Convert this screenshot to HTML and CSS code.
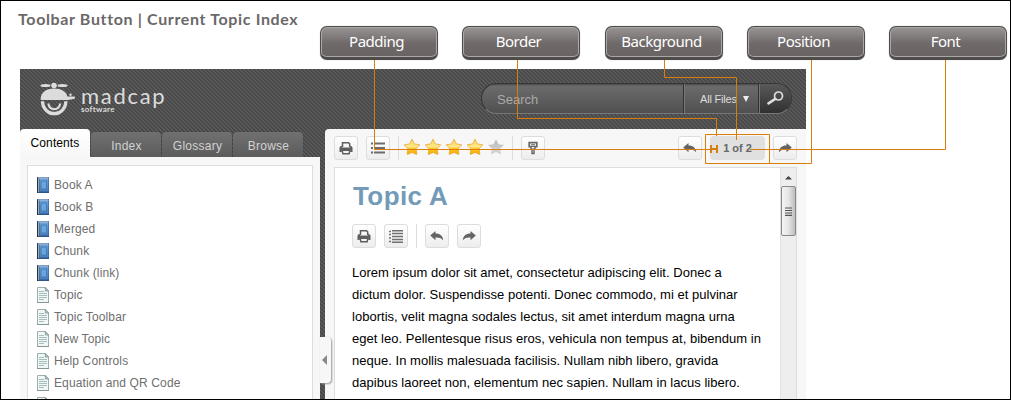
FILE: index.html
```
<!DOCTYPE html>
<html lang="en">
<head>
<meta charset="utf-8">
<title>Toolbar Button | Current Topic Index</title>
<link rel="stylesheet" href="styles.css">
</head>
<body>
<svg class="defs" width="0" height="0">
  <defs>
    <linearGradient id="gold" x1="0" y1="0" x2="0" y2="1"><stop offset="0" stop-color="#ffd84e"/><stop offset=".5" stop-color="#ffe88c"/><stop offset=".62" stop-color="#fdc724"/><stop offset="1" stop-color="#f7ac00"/></linearGradient>
    <linearGradient id="blue" x1="0" y1="0" x2="0" y2="1"><stop offset="0" stop-color="#6aa4dc"/><stop offset="1" stop-color="#4a7fbe"/></linearGradient>
    <linearGradient id="silver" x1="0" y1="0" x2="0" y2="1"><stop offset="0" stop-color="#b5b5b5"/><stop offset="1" stop-color="#ddd"/></linearGradient>
    <symbol id="print" viewBox="0 0 14 14"><path d="M3.500 6V1.700h6l1.200 1.200V6" fill="none" stroke="#5e5e5e" stroke-width="1.500"/><path d="M1.800 5h1.100v1.400h8.200V5h1.100l1.300 1.600v4.400h-2.200V9.300H2.700V11H.5V6.600z" fill="#5e5e5e"/><path d="M3.200 9.300h7.600l-.7 3.500H3.900z" fill="#f4f4f4" stroke="#5e5e5e" stroke-width="1.500"/></symbol>
    <symbol id="list" viewBox="0 0 14 13"><path d="M0 1.500h2M0 4.500h2M0 8h2M0 11.500h2M3 .8h11M3 3.500h11M3 6.500h11M3 9.500h11M3 12.200h11" stroke="#707070" stroke-width="1.400"/></symbol>
    <symbol id="list3" viewBox="0 0 14 12"><path d="M0 1.500h2M0 6h2M0 10.500h2M3 1.500h11M3 6h11M3 10.500h11" stroke="#6c6c6c" stroke-width="1.800"/></symbol>
    <symbol id="back" viewBox="0 0 14 10"><path d="M5.500 0v2.600C10 2.500 12.800 5 13.200 9.200 11 7.100 8.800 6.400 5.500 6.600v2.600L.2 4.600z" fill="#646464"/></symbol>
    <symbol id="star" viewBox="0 0 16 16"><path d="M8 .2l2.300 4.700 5.500.9-3.700 3.900.8 5.600H12L8 13.400l-4 1.900h-.9l.8-5.600L.2 5.800l5.500-.9z" fill="url(#gold)" stroke="#e3a02a" stroke-width=".7"/></symbol>
    <symbol id="book" viewBox="0 0 12 16"><path d="M0 0h12v16H0z" fill="#31568a"/><path d="M2.500 1.500h9v13h-9z" fill="url(#blue)"/><path d="M1 .5h10.500v1H1z" fill="#d8e5ef"/><path d="M1.500 2v13" stroke="#aaa"/><path d="M.4 1.500V16" stroke="#222" stroke-width=".8"/><path d="M4 4h5.500v8H4z" fill="#6aa5db" stroke="#3f75b0" stroke-width=".8"/></symbol>
    <symbol id="page" viewBox="0 0 12 16"><path d="M.5.500h8L11.500 4v11.500H.5z" fill="#f0f7f6" stroke="#9cafae"/><path d="M8.300.5V4h3.200z" fill="#c5d6d4" stroke="#78908e" stroke-width=".8"/><path d="M2 4.500h5M2 6.500h8M2 8.500h8M2 10.500h8M2 12.500h5" stroke="#a4bfbb"/><path d="M0 15.500h12" stroke="#839795"/></symbol>
  </defs>
</svg>
<div class="frame">
  <h1 class="title">Toolbar Button | Current Topic Index</h1>
  <div class="callouts">
    <span class="callout">Padding</span><span class="callout">Border</span><span class="callout wide">Background</span><span class="callout">Position</span><span class="callout">Font</span>
  </div>
  <div class="app">
    <header class="header">
      <div class="logo">
        <svg width="36" height="36" viewBox="0 0 36 36"><g fill="#dcdcdc"><ellipse cx="5.500" cy="3.600" rx="5" ry="1.500"/><ellipse cx="22.500" cy="3.600" rx="5" ry="1.500"/><circle cx="14" cy="3.500" r="2.800"/><path d="M.7 17C.7 10.500 6.500 6.500 14 6.500S26.500 10 27.500 14.500h7.300v2.300L28 18H.7z"/><circle cx="30.500" cy="12.700" r="1.200"/></g><path d="M2.500 19.200a11.700 12.500 0 0 0 23.400 0" fill="none" stroke="#dcdcdc" stroke-width="3.200"/><path d="M8.300 21.500c1.300 7.500 10.400 7.500 12 0" fill="none" stroke="#dcdcdc" stroke-width="2"/></svg>
        <div class="brand"><span class="name">madcap</span><span class="sub">software</span></div>
      </div>
      <div class="search">
        <span class="query">Search</span>
        <span class="filter">All Files<i class="caret"></i></span>
        <span class="go"><svg width="18" height="14" viewBox="0 0 18 14"><circle cx="11.500" cy="5" r="4" fill="none" stroke="#ddd" stroke-width="1.700"/><path d="M8.300 7.800L1.500 12.300" stroke="#ddd" stroke-width="2.600" stroke-linecap="round"/></svg></span>
      </div>
    </header>
    <div class="columns">
      <aside class="sidebar">
        <nav class="tabs"><span class="tab active">Contents</span><span class="tab">Index</span><span class="tab">Glossary</span><span class="tab">Browse</span></nav>
        <div class="panel">
          <ul class="tree">
            <li><svg><use href="#book"/></svg>Book A</li>
            <li><svg><use href="#book"/></svg>Book B</li>
            <li><svg><use href="#book"/></svg>Merged</li>
            <li><svg><use href="#book"/></svg>Chunk</li>
            <li><svg><use href="#book"/></svg>Chunk (link)</li>
            <li><svg><use href="#page"/></svg>Topic</li>
            <li><svg><use href="#page"/></svg>Topic Toolbar</li>
            <li><svg><use href="#page"/></svg>New Topic</li>
            <li><svg><use href="#page"/></svg>Help Controls</li>
            <li><svg><use href="#page"/></svg>Equation and QR Code</li>
            <li><svg><use href="#page"/></svg></li>
          </ul>
        </div>
      </aside>
      <main class="main">
        <div class="handle"><i></i></div>
        <div class="toolbar">
          <span class="btn"><svg width="14" height="14"><use href="#print"/></svg></span>
          <span class="btn"><svg width="14" height="12"><use href="#list3"/></svg></span>
          <i class="sep"></i>
          <span class="stars">
            <svg width="16" height="16"><use href="#star"/></svg><svg width="16" height="16"><use href="#star"/></svg><svg width="16" height="16"><use href="#star"/></svg><svg width="16" height="16"><use href="#star"/></svg><svg width="16" height="16" viewBox="0 0 16 16"><path d="M8 1l2.200 4.700 5 .5-3.700 3.500 1 5L8 12.500l-4.500 2.200 1-5L.8 6.200l5-.5z" fill="url(#silver)" stroke="#bbb" stroke-width=".6"/></svg>
          </span>
          <i class="sep"></i>
          <span class="btn"><svg width="10" height="14" viewBox="0 0 10 14"><path d="M1.200 1.700h7.600v4H1.200z" fill="none" stroke="#666" stroke-width="1.700"/><path d="M3 3.700h4" stroke="#666"/><path d="M3 6v2h1v4.500h2V8h1V6" fill="#eee" stroke="#666" stroke-width="1.400"/></svg></span>
          <span class="btn first-right"><svg width="14" height="10"><use href="#back"/></svg></span>
          <span class="counter">1 of 2</span>
          <span class="btn"><svg class="flip" width="14" height="10"><use href="#back"/></svg></span>
        </div>
        <div class="viewport">
          <article class="topic">
            <h2>Topic A</h2>
            <div class="mini">
              <span class="btn"><svg width="14" height="14"><use href="#print"/></svg></span>
              <span class="btn"><svg width="14" height="13"><use href="#list"/></svg></span>
              <i class="sep"></i>
              <span class="btn"><svg width="14" height="10"><use href="#back"/></svg></span>
              <span class="btn"><svg class="flip" width="14" height="10"><use href="#back"/></svg></span>
            </div>
            <p>Lorem ipsum dolor sit amet, consectetur adipiscing elit. Donec a<br>dictum dolor. Suspendisse potenti. Donec commodo, mi et pulvinar<br>lobortis, velit magna sodales lectus, sit amet interdum magna urna<br>eget leo. Pellentesque risus eros, vehicula non tempus at, bibendum in<br>neque. In mollis malesuada facilisis. Nullam nibh libero, gravida<br>dapibus laoreet non, elementum nec sapien. Nullam in lacus libero.</p>
          </article>
          <div class="scrollbar">
            <svg width="9" height="5" viewBox="0 0 9 5"><path d="M1 4.500L4.500 1 8 4.500z" fill="#444"/></svg>
            <div class="thumb"><svg width="7" height="9" viewBox="0 0 7 9"><path d="M0 1h7M0 3.500h7M0 6h7M0 8.300h7" stroke="#555" stroke-width="1.200"/></svg></div>
          </div>
        </div>
      </main>
    </div>
  </div>
  <svg class="leaders" width="1011" height="400" viewBox="0 0 1011 400">
    <g fill="none" stroke="#d97c08" stroke-width="1">
      <path d="M374.500 60v89.500H710M750 149.500h195.500V60"/>
      <path d="M517.500 60v58.500h199V136"/>
      <path d="M664.500 60v17.500h72V140"/>
      <path d="M811.500 60v103.500H769"/>
      <path d="M705.500 134.500h64v29h-64z"/>
      <path d="M711 145v8M717 145v8M711 149h6" stroke-width="2"/>
    </g>
  </svg>
</div>
</body>
</html>
```
FILE: styles.css
```
* { box-sizing: border-box; }
body { margin: 0; background: #fff; font-family: "Liberation Sans", Arial, sans-serif; }
svg { display: block; flex: none; }
.defs { position: absolute; }
.frame { position: relative; width: 1011px; height: 400px; border: 1px solid #000; overflow: hidden; display: flex; flex-direction: column; }
.title { margin: 0; padding: 8px 0 0 17px; height: 25px; flex: none; font: bold 16px/20px Lato, sans-serif; color: #6b6868; letter-spacing: .64px; white-space: nowrap; }
.callouts { display: flex; gap: 24px; padding-left: 319px; height: 43px; flex: none; }
.callout { width: 118px; height: 34px; padding-right: 5px; border-radius: 7px; border: 1px solid #4e4b4b; border-bottom-width: 3px; background: linear-gradient(#999594, #6f6a69 55%, #696463); box-shadow: inset 0 0 0 1px #aaa7a6, 0 0 1px #8a9a8c; color: #fff; font: 15px/29px "Noto Sans", sans-serif; letter-spacing: -.5px; text-align: center; flex: none; }
.callout.wide { margin-left: 1px; }
.app { width: 786px; height: 330px; margin-left: 19px; flex: none; background: linear-gradient(45deg, #484848 25%, #5a5a5a 25% 50%, #484848 50% 75%, #5a5a5a 75%) 0 0 / 4px 4px; overflow: hidden; }
.header { height: 60px; display: flex; justify-content: space-between; padding: 13px 14px 0 20px; }
.logo { display: flex; gap: 5px; }
.brand { display: flex; flex-direction: column; color: #dcdcdc; }
.name { font: 22px/22px Lato, sans-serif; letter-spacing: 1.7px; padding-top: 3px; }
.sub { font: bold 8px/8px Lato, sans-serif; margin-top: -2px; letter-spacing: .3px; }
.search { display: flex; width: 311px; height: 31px; margin-top: 1px; border: 1px solid #363636; border-bottom-color: #777; border-radius: 16px; background: linear-gradient(#4b4b4b, #6b6b6b 8%, #505050); overflow: hidden; color: #ddd; }
.query { width: 202px; padding-left: 15px; font-size: 13px; line-height: 31px; color: #aaa; border-right: 1px solid #333; }
.filter { width: 75px; padding-left: 15px; border-left: 1px solid #777; border-right: 1px solid #303030; font-size: 11px; line-height: 28px; letter-spacing: -.2px; display: flex; align-items: center; gap: 6px; white-space: nowrap; }
.caret { border: 3.5px solid transparent; border-top: 6px solid #eee; border-bottom: 0; }
.go { flex: 1; background: linear-gradient(#595959, #303030); border-left: 1px solid #777; padding: 7px 0 0 7px; }
.columns { display: flex; gap: 5px; height: 270px; }
.sidebar { width: 300px; display: flex; flex-direction: column; }
.tabs { display: flex; gap: 1px; height: 28px; align-items: flex-end; }
.tab { width: 70px; height: 25px; padding-left: 1px; border-radius: 4px 4px 0 0; background: linear-gradient(#707070, #5c5c5c); color: #d2d2d2; font-size: 12px; line-height: 28px; text-align: center; letter-spacing: .25px; box-shadow: 0 0 1px #333; }
.tab.active { height: 28px; padding: 0; background: linear-gradient(#fff, #f7f7f7); color: #000; line-height: 28px; letter-spacing: .1px; box-shadow: none; }
.panel { flex: 1; background: #f7f7f7; padding: 8px 7px 0; }
.tree { margin: 0; padding: 8px 0 0 9px; list-style: none; height: 262px; overflow: hidden; background: #fff; border: 1px solid #ddd; border-bottom: 0; }
.tree li { display: flex; align-items: center; gap: 5px; height: 22px; font-size: 12px; letter-spacing: .12px; color: #6e6e6e; white-space: nowrap; }
.tree svg { width: 12px; height: 16px; }
.main { position: relative; width: 481px; background: #f7f7f7; border-radius: 4px 0 0 0; padding: 7px 9px 0; }
.handle { position: absolute; left: -5px; top: 208px; width: 11px; height: 46px; background: #f7f7f7; border-radius: 0 4px 4px 0; box-shadow: 1px 1px 2px #999; display: flex; align-items: center; padding-left: 2px; }
.handle i { border: 5px solid transparent; border-right-color: #888; border-left: 0; }
.toolbar { display: flex; gap: 8px; height: 31px; }
.btn { display: flex; width: 24px; height: 24px; align-items: center; justify-content: center; border: 1px solid #ddd; border-radius: 3px; background: linear-gradient(#fff, #ededed); flex: none; }
.flip { transform: scaleX(-1); }
.sep { width: 1px; height: 24px; background: #dcdcdc; flex: none; }
.stars { display: flex; gap: 5px; padding-top: 3px; margin-left: -3px; width: 100px; }
.first-right { margin-left: auto; }
.counter { width: 55px; height: 24px; border-radius: 4px; background: #e0e0e0; color: #666; font-weight: bold; font-size: 11px; line-height: 24px; text-align: center; }
.viewport { display: flex; height: 232px; background: #fff; border: 1px solid #ddd; border-bottom: 0; }
.topic { width: 445px; padding: 10px 0 0 17px; overflow: hidden; }
.topic h2 { margin: 0 0 10px; padding-left: 1px; font-size: 26px; line-height: 36px; letter-spacing: .4px; color: #739bb8; }
.mini { display: flex; gap: 8px; }
.topic p { margin: 14px 0 0; font-size: 13px; line-height: 22px; color: #000; white-space: nowrap; letter-spacing: .02px; }
.scrollbar { width: 16px; background: #eee; border-left: 1px solid #e2e2e2; display: flex; flex-direction: column; align-items: center; padding-top: 7px; }
.thumb { width: 15px; height: 50px; margin-top: 6px; border: 1px solid #888; border-radius: 2px; background: linear-gradient(90deg, #f5f5f5, #e5e5e5 50%, #bdbdbd); display: flex; align-items: center; justify-content: center; }
.leaders { position: absolute; left: -1px; top: -1px; pointer-events: none; }
```
